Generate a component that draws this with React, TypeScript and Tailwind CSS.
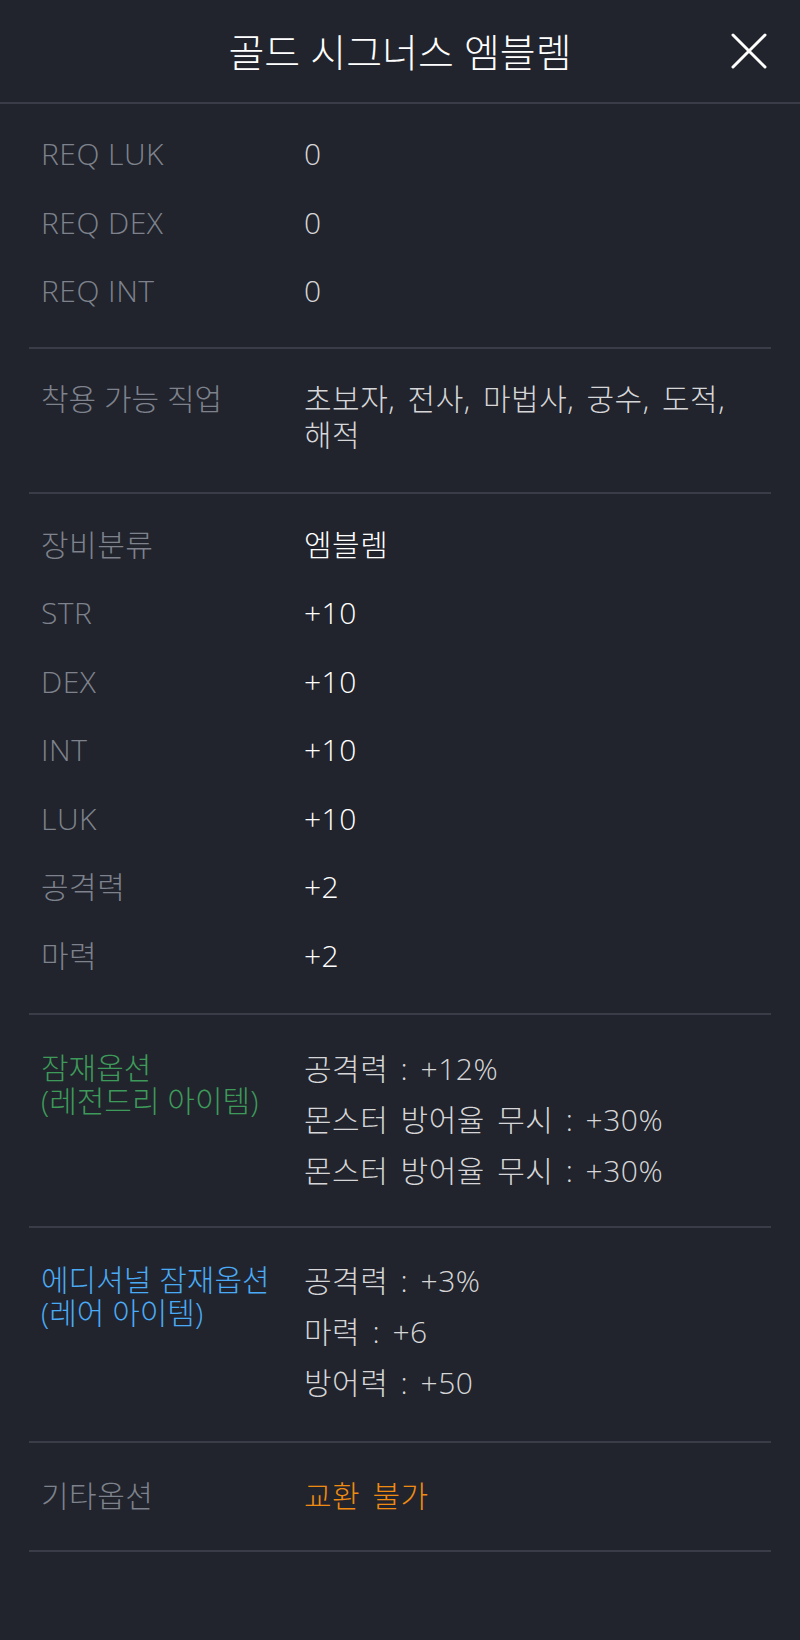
import React from "react";

type Row = {
  label: React.ReactNode;
  value: React.ReactNode;
  labelClass?: string;
  valueClass?: string;
};

const font = "font-['Open_Sans','Noto_Sans_CJK_KR',sans-serif]";
const valueText = "tracking-[0.5px] [word-spacing:4px]";

const StatRow = ({ label, value, labelClass, valueClass }: Row) => (
  <div className="grid grid-cols-[263px_1fr] items-center h-[68.5px] pl-3">
    <span className={labelClass ?? "text-[#7e828c] tracking-[0.5px]"}>{label}</span>
    <span className={`${valueText} ${valueClass ?? "text-[#d6d6d8]"}`}>
      {value}
    </span>
  </div>
);

const Section = ({
  children,
  className,
}: {
  children: React.ReactNode;
  className?: string;
}) => (
  <div className={`border-b-2 border-[#3a3d48] ${className ?? ""}`}>
    {children}
  </div>
);

export default function App() {
  return (
    <div
      className={`min-h-[1640px] w-[800px] bg-[#21242c] text-[30px] font-light leading-none ${font}`}
    >
      <header className="relative flex h-[104px] items-center justify-center border-b-2 border-[#3a3d48]">
        <h1 className="text-[39px] text-white">골드 시그너스 엠블렘</h1>
        <button className="absolute right-[32px] top-[32px] h-[38px] w-[38px] text-white">
          <svg viewBox="0 0 38 38" className="h-full w-full">
            <path
              d="M3 3 L35 35 M35 3 L3 35"
              stroke="currentColor"
              strokeWidth="3"
              strokeLinecap="round"
            />
          </svg>
        </button>
      </header>

      <div className="px-[29px]">
        <Section className="pt-[16px] pb-[21px]">
          <StatRow label="REQ LUK" value="0" />
          <StatRow label="REQ DEX" value="0" />
          <StatRow label="REQ INT" value="0" />
        </Section>

        <Section className="pt-[32px] pb-[39px]">
          <div className="grid grid-cols-[263px_1fr] pl-3 leading-[36px]">
            <span className="text-[#7e828c]">착용 가능 직업</span>
            <span className={`${valueText} text-[#d6d6d8]`}>
              초보자, 전사, 마법사, 궁수, 도적,
              <br />
              해적
            </span>
          </div>
        </Section>

        <Section className="pt-[17px] pb-[23px]">
          <StatRow label="장비분류" value="엠블렘" valueClass="text-white" />
          <StatRow label="STR" value="+10" valueClass="text-white" />
          <StatRow label="DEX" value="+10" valueClass="text-white" />
          <StatRow label="INT" value="+10" valueClass="text-white" />
          <StatRow label="LUK" value="+10" valueClass="text-white" />
          <StatRow label="공격력" value="+2" valueClass="text-white" />
          <StatRow label="마력" value="+2" valueClass="text-white" />
        </Section>

        <Section className="pt-[28px] pb-[30px]">
          <div className="grid grid-cols-[263px_1fr] pl-3">
            <div className="pt-[8px] leading-[33px] text-[#3d9a5a]">
              잠재옵션
              <br />
              (레전드리 아이템)
            </div>
            <div className={`flex flex-col ${valueText} text-[#d6d6d8]`}>
              <span className="leading-[51px]">공격력 : +12%</span>
              <span className="leading-[51px]">몬스터 방어율 무시 : +30%</span>
              <span className="leading-[51px]">몬스터 방어율 무시 : +30%</span>
            </div>
          </div>
        </Section>

        <Section className="pt-[27px] pb-[33px]">
          <div className="grid grid-cols-[263px_1fr] pl-3">
            <div className="pt-[8px] leading-[33px] text-[#4aaaf5]">
              에디셔널 잠재옵션
              <br />
              (레어 아이템)
            </div>
            <div className={`flex flex-col ${valueText} text-[#d6d6d8]`}>
              <span className="leading-[51px]">공격력 : +3%</span>
              <span className="leading-[51px]">마력 : +6</span>
              <span className="leading-[51px]">방어력 : +50</span>
            </div>
          </div>
        </Section>

        <Section className="pt-[19px] pb-[19px]">
          <StatRow label="기타옵션" value="교환 불가" valueClass="text-[#ef8a12]" />
        </Section>
      </div>
    </div>
  );
}
